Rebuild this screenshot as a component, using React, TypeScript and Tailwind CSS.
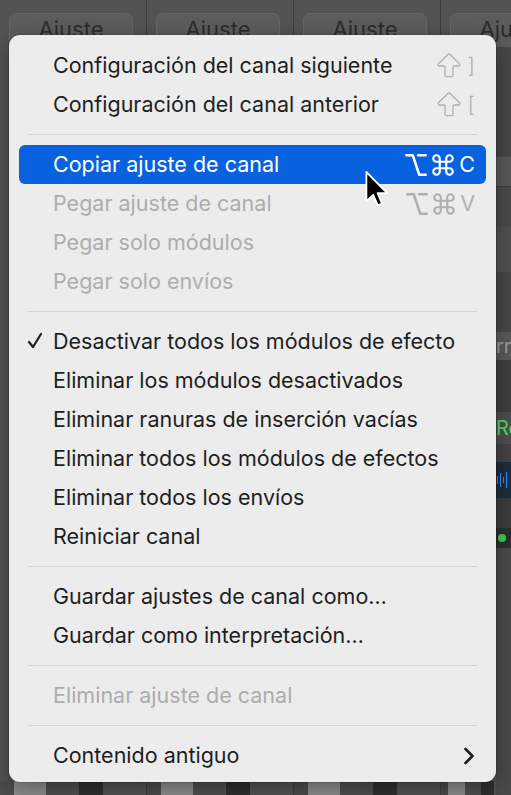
import type { ReactNode } from 'react'
import { ArrowBigUp, Command, Option } from 'lucide-react'

type Item =
  | { kind: 'sep' }
  | {
      kind: 'item'
      label: string
      shortcut?: ReactNode
      disabled?: boolean
      active?: boolean
      checked?: boolean
      submenu?: boolean
    }

function Shift({ ch }: { ch: string }) {
  return (
    <span className="flex items-center">
      <ArrowBigUp size={32} strokeWidth={1} />
      <span className="ml-[3px] font-light">{ch}</span>
    </span>
  )
}

function OptCmd({ ch }: { ch: string }) {
  return (
    <span className="flex items-center">
      <Option size={26} strokeWidth={2.3} />
      <Command size={26} strokeWidth={2} className="ml-[1px]" />
      <span className="ml-[3px]">{ch}</span>
    </span>
  )
}

const items: Item[] = [
  { kind: 'item', label: 'Configuración del canal siguiente', shortcut: <Shift ch="]" /> },
  { kind: 'item', label: 'Configuración del canal anterior', shortcut: <Shift ch="[" /> },
  { kind: 'sep' },
  { kind: 'item', label: 'Copiar ajuste de canal', shortcut: <OptCmd ch="C" />, active: true },
  { kind: 'item', label: 'Pegar ajuste de canal', shortcut: <OptCmd ch="V" />, disabled: true },
  { kind: 'item', label: 'Pegar solo módulos', disabled: true },
  { kind: 'item', label: 'Pegar solo envíos', disabled: true },
  { kind: 'sep' },
  { kind: 'item', label: 'Desactivar todos los módulos de efecto', checked: true },
  { kind: 'item', label: 'Eliminar los módulos desactivados' },
  { kind: 'item', label: 'Eliminar ranuras de inserción vacías' },
  { kind: 'item', label: 'Eliminar todos los módulos de efectos' },
  { kind: 'item', label: 'Eliminar todos los envíos' },
  { kind: 'item', label: 'Reiniciar canal' },
  { kind: 'sep' },
  { kind: 'item', label: 'Guardar ajustes de canal como…' },
  { kind: 'item', label: 'Guardar como interpretación…' },
  { kind: 'sep' },
  { kind: 'item', label: 'Eliminar ajuste de canal', disabled: true },
  { kind: 'sep' },
  { kind: 'item', label: 'Contenido antiguo', submenu: true },
]

function Strip({ last }: { last?: boolean }) {
  return (
    <div className={last ? 'flex-1 flex flex-col overflow-hidden' : 'w-[147px] shrink-0 flex flex-col border-r border-[#3e3e3e]'}>
      <div className="pt-[13px] pl-[9px] pr-[13px] h-[47px]">
        <div className="h-[40px] w-[124px] rounded-[7px] bg-[#5c5c5c] border border-[#666] text-center text-[22px] leading-[30px] text-[#2c2c2c]">
          Ajuste
        </div>
      </div>
      <div className="flex-1" />
      <div className="h-[14px] flex">
        <div className="w-[14px] bg-[#4c4c4c]" />
        <div className="w-[32px] bg-[#8d8d8d]" />
        <div className="w-[33px] bg-[#4f4f4f]" />
        <div className="w-[24px] bg-[#2f2f2f]" />
        <div className="w-[34px] bg-[#525252]" />
      </div>
    </div>
  )
}

// sliver of the next channel strip, visible to the right of the menu
function RightEdge() {
  return (
    <div className="flex flex-col w-[15px] h-full overflow-hidden">
      <div className="h-[47px]" />
      <div className="h-[110px] bg-[#474747]" />
      <div className="h-[30px] bg-[#595959] border-b border-[#3a3a3a]" />
      <div className="h-[40px] bg-[#4a4a4a]" />
      <div className="h-[45px] bg-[#505050]" />
      <div className="h-[60px] bg-[#474747]" />
      <div className="h-[28px] bg-[#5a5a5a] text-[20px] leading-[28px] text-[#9a9a9a] whitespace-nowrap">rr</div>
      <div className="h-[52px] bg-[#3f3f3f]" />
      <div className="h-[32px] bg-[#4e4e4e] text-[20px] leading-[32px] text-[#4cd964] whitespace-nowrap">Re</div>
      <div className="h-[18px] bg-[#434343]" />
      <div className="h-[36px] bg-[#1f2c3b] flex items-center gap-[2px] pl-[1px]">
        <div className="w-[1px] h-[8px] bg-[#2f8ff5]" />
        <div className="w-[1px] h-[14px] bg-[#2f8ff5]" />
        <div className="w-[1px] h-[6px] bg-[#2f8ff5]" />
        <div className="w-[1px] h-[16px] bg-[#2f8ff5]" />
      </div>
      <div className="h-[30px] bg-[#3c3c3c]" />
      <div className="h-[20px] bg-[#2f2f2f] flex items-center">
        <div className="w-[8px] h-[8px] rounded-full bg-[#3ad14f] ml-[2px]" />
      </div>
      <div className="flex-1 bg-[#4a4a4a]" />
    </div>
  )
}

function Cursor() {
  return (
    <svg className="absolute left-[364px] top-[170px]" width="26" height="38" viewBox="0 0 13 19">
      <path
        d="M1.2 1 V15.6 L4.6 12.4 L6.9 17.7 L9 16.8 L6.8 11.6 H11.6 Z"
        fill="#000"
        stroke="#fff"
        strokeWidth="0.9"
        strokeLinejoin="round"
      />
    </svg>
  )
}

export default function App() {
  return (
    <div
      className="relative w-[511px] h-[795px] overflow-hidden bg-[#535353]"
      style={{ fontFamily: 'Inter, "Liberation Sans", sans-serif' }}
    >
      <div className="absolute inset-0 flex">
        <Strip />
        <Strip />
        <Strip />
        <Strip last />
      </div>
      <div className="absolute right-0 top-0 bottom-0">
        <RightEdge />
      </div>

      {/* context menu */}
      <div className="absolute left-[9px] top-[35px] w-[487px] rounded-[11px] bg-[#ececec] pt-[11px] pb-[7px] shadow-[0_0_0_1px_rgba(0,0,0,0.12),0_6px_20px_rgba(0,0,0,0.35)]">
        {items.map((it, i) =>
          it.kind === 'sep' ? (
            <div key={i} className="h-[21px] flex items-center px-[19px]">
              <div className="h-[1px] w-full bg-[#d3d3d3]" />
            </div>
          ) : (
            <div key={i} className="h-[39px] px-[10px]">
              <div
                className={
                  'relative h-full flex items-center rounded-[6px] pl-[34px] pr-[11px] text-[21.5px] ' +
                  (it.active ? 'bg-[#0862df] text-white' : it.disabled ? 'text-[#adadad]' : 'text-[#1e1e1e]')
                }
              >
                {it.checked && (
                  <svg className="absolute left-[8px] top-[10px]" width="16" height="18" viewBox="0 0 16 18">
                    <path d="M2 10 L6 15 L14 2" fill="none" stroke="#1e1e1e" strokeWidth="2.2" strokeLinecap="round" strokeLinejoin="round" />
                  </svg>
                )}
                <span className="flex-1 whitespace-nowrap">{it.label}</span>
                {it.shortcut && (
                  <span className={it.active ? 'text-white' : 'text-[#b0b0b0]'}>{it.shortcut}</span>
                )}
                {it.submenu && (
                  <svg width="12" height="18" viewBox="0 0 12 18">
                    <path d="M2.5 2 L9.5 9 L2.5 16" fill="none" stroke="#1e1e1e" strokeWidth="2.6" strokeLinecap="round" strokeLinejoin="round" />
                  </svg>
                )}
              </div>
            </div>
          )
        )}
      </div>

      <Cursor />
    </div>
  )
}
